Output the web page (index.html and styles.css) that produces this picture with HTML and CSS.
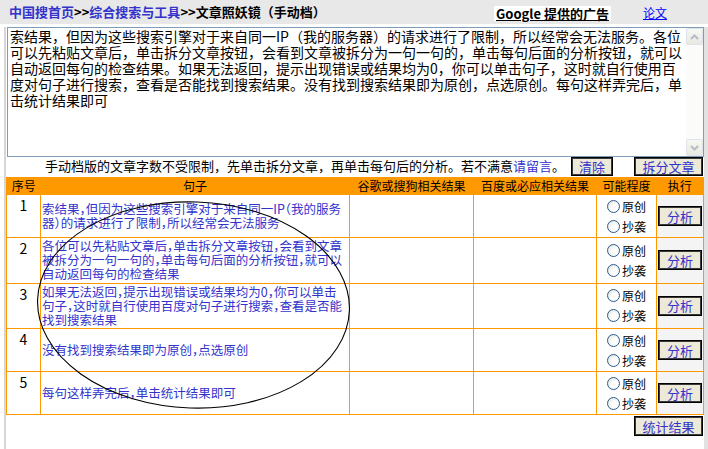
FILE: index.html
```html
<!DOCTYPE html>
<html lang="zh-CN">
<head>
    <meta charset="UTF-8">
    <meta name="viewport" content="width=device-width, initial-scale=1.0">
    <title>文章照妖镜（手动档）</title>
    <link rel="stylesheet" href="styles.css">
</head>
<body>

<div class="topbar">
    <div class="crumbs">
        <a href="#" class="crumb-link">中国搜首页</a>&gt;&gt;<a href="#" class="crumb-link">综合搜索与工具</a>&gt;&gt;文章照妖镜（手动档）
    </div>
    <div class="ad-title">Google 提供的广告</div>
    <a href="#" class="paper-link">论文</a>
</div>

<div class="page">

    <!-- 文章输入框 -->
    <div class="editor">
        <textarea class="article" name="article">索结果，但因为这些搜索引擎对于来自同一IP（我的服务器）的请求进行了限制，所以经常会无法服务。各位
可以先粘贴文章后，单击拆分文章按钮，会看到文章被拆分为一句一句的，单击每句后面的分析按钮，就可以
自动返回每句的检查结果。如果无法返回，提示出现错误或结果均为0，你可以单击句子，这时就自行使用百
度对句子进行搜索，查看是否能找到搜索结果。没有找到搜索结果即为原创，点选原创。每句这样弄完后，单
击统计结果即可</textarea>
        <div class="scrollbar">
            <span class="sb-btn"><svg width="9" height="6" viewBox="0 0 9 6"><path d="M1 5 L4.5 1.5 L8 5" fill="none" stroke="#b4bccb" stroke-width="2"/></svg></span>
            <span class="sb-track"></span>
            <span class="sb-btn"><svg width="9" height="6" viewBox="0 0 9 6"><path d="M1 1 L4.5 4.5 L8 1" fill="none" stroke="#b4bccb" stroke-width="2"/></svg></span>
        </div>
    </div>

    <div class="toolbar">
        <span class="hint">手动档版的文章字数不受限制，先单击拆分文章，再单击每句后的分析。若不满意<a href="#" class="msg-link">请留言</a>。</span>
        <button class="btn btn-clear">清除</button>
        <button class="btn btn-split">拆分文章</button>
    </div>

    <!-- 句子列表 -->
    <div class="results">
        <table class="sentences">
            <colgroup>
                <col class="c-no"><col class="c-text"><col class="c-google"><col class="c-baidu"><col class="c-level"><col class="c-run">
            </colgroup>
            <thead>
                <tr><th>序号</th><th>句子</th><th>谷歌或搜狗相关结果</th><th>百度或必应相关结果</th><th>可能程度</th><th>执行</th></tr>
            </thead>
            <tbody>
                <tr>
                    <td class="no">1</td>
                    <td class="text">索结果，但因为这些搜索引擎对于来自同一IP（我的服务<br>器）的请求进行了限制，所以经常会无法服务</td>
                    <td></td><td></td>
                    <td class="level"><label><input type="radio" name="r1">原创</label><label><input type="radio" name="r1">抄袭</label></td>
                    <td class="run"><button class="btn btn-run">分析</button></td>
                </tr>
                <tr>
                    <td class="no">2</td>
                    <td class="text">各位可以先粘贴文章后，单击拆分文章按钮，会看到文章<br>被拆分为一句一句的，单击每句后面的分析按钮，就可以<br>自动返回每句的检查结果</td>
                    <td></td><td></td>
                    <td class="level"><label><input type="radio" name="r2">原创</label><label><input type="radio" name="r2">抄袭</label></td>
                    <td class="run"><button class="btn btn-run">分析</button></td>
                </tr>
                <tr>
                    <td class="no">3</td>
                    <td class="text">如果无法返回，提示出现错误或结果均为0，你可以单击<br>句子，这时就自行使用百度对句子进行搜索，查看是否能<br>找到搜索结果</td>
                    <td></td><td></td>
                    <td class="level"><label><input type="radio" name="r3">原创</label><label><input type="radio" name="r3">抄袭</label></td>
                    <td class="run"><button class="btn btn-run">分析</button></td>
                </tr>
                <tr>
                    <td class="no">4</td>
                    <td class="text">没有找到搜索结果即为原创，点选原创</td>
                    <td></td><td></td>
                    <td class="level"><label><input type="radio" name="r4">原创</label><label><input type="radio" name="r4">抄袭</label></td>
                    <td class="run"><button class="btn btn-run">分析</button></td>
                </tr>
                <tr>
                    <td class="no">5</td>
                    <td class="text">每句这样弄完后，单击统计结果即可</td>
                    <td></td><td></td>
                    <td class="level"><label><input type="radio" name="r5">原创</label><label><input type="radio" name="r5">抄袭</label></td>
                    <td class="run"><button class="btn btn-run">分析</button></td>
                </tr>
            </tbody>
        </table>
        <svg class="circle" width="360" height="240" viewBox="0 0 360 240">
            <ellipse cx="187.5" cy="128" rx="156" ry="103" transform="rotate(2 187.5 128)" fill="none" stroke="#000" stroke-width="1.1"/>
        </svg>
    </div>

    <div class="footer">
        <button class="btn btn-total">统计结果</button>
    </div>
</div>

</body>
</html>
```

FILE: styles.css
```css
/* 页面 */
body {
    margin: 0;
    padding: 0;
    background-color: #ffffff;
    font-family: "Noto Sans CJK SC", "Liberation Sans", sans-serif;
    font-size: 13px;
    color: #000;
}
a {
    color: #3333cc;
    text-decoration: none;
}

/* 顶部导航 */
.topbar {
    display: flex;
    align-items: center;
    height: 24px;
    background-color: #e8e8e8;
}
.crumbs {
    flex: 1;
    padding-left: 9px;
    font-size: 13px;
    font-weight: bold;
    line-height: 16px;
}
.ad-title {
    width: 117px;
    height: 15px;
    margin-top: 2px;
    background-color: #fff;
    font-size: 13px;
    font-weight: bold;
    line-height: 15px;
    text-align: center;
    text-decoration: underline;
}
.paper-link {
    margin: 0 41px 0 32px;
    color: #0000ff;
    font-size: 12px;
    text-decoration: underline;
}

.page {
    margin-left: 4px;
    border-left: 2px solid #d6d6d6;
    border-right: 4px solid #e2e2e2;
    min-height: calc(100vh - 24px);
}

/* 输入框 */
.editor {
    display: flex;
    box-sizing: border-box;
    width: 697px;
    height: 130px;
    margin: 3px 0 0 1px;
    border: 1px solid #7f9db9;
}
.article {
    flex: 1;
    margin: 0;
    padding: 0 2px;
    border: none;
    resize: none;
    overflow: hidden;
    outline: none;
    font-family: "Noto Sans CJK SC", sans-serif;
    font-size: 14px;
    line-height: 16px;
    color: #000;
}
.scrollbar {
    display: flex;
    flex-direction: column;
    width: 17px;
    background-color: #fbfbf9;
}
.sb-btn {
    display: flex;
    align-items: center;
    justify-content: center;
    box-sizing: border-box;
    height: 17px;
    border: 1px solid #dfe3ea;
    border-radius: 2px;
    background: linear-gradient(#f7f7f3, #e9e8e0);
}
.sb-track {
    flex: 1;
}

/* 工具条 */
.toolbar {
    display: flex;
    align-items: flex-start;
    height: 20px;
}
.hint {
    margin-left: 39px;
    margin-top: 1px;
    font-size: 13px;
    line-height: 16px;
}
.msg-link {
    color: #3333cc;
}
.btn {
    box-sizing: border-box;
    height: 19px;
    padding: 0;
    border: 1px solid #000;
    box-shadow: inset 0 0 0 1px #3a3a3a;
    background-color: #ece9d8;
    color: #3333cc;
    font-family: "Noto Sans CJK SC", sans-serif;
    font-size: 13px;
    line-height: 15px;
    cursor: pointer;
}
.btn-clear {
    width: 42px;
    margin-left: auto;
}
.btn-split {
    width: 69px;
    margin: 0 1px 0 21px;
}

/* 表格 */
.results {
    position: relative;
}
.sentences {
    width: 697px;
    table-layout: fixed;
    border-collapse: collapse;
    border: 1px solid #ff9900;
}
.c-no { width: 34px; }
.c-text { width: 309px; }
.c-google { width: 124px; }
.c-baidu { width: 123px; }
.c-level { width: 60px; }
.c-run { width: 47px; }

.sentences th {
    height: 16px;
    padding: 0;
    background-color: #ff9900;
    font-size: 12px;
    font-weight: normal;
    line-height: 16px;
}
.sentences td {
    padding: 1px 0;
    border: 1px solid #ff9900;
    vertical-align: middle;
}
.sentences td.no {
    padding-top: 2px;
    vertical-align: top;
    text-align: center;
    font-size: 14px;
    line-height: 16px;
}
.sentences td.text {
    padding-left: 1px;
    color: #3333cc;
    font-size: 12.5px;
    line-height: 14.2px;
    white-space: nowrap;
    font-feature-settings: "halt";
}
.level label {
    display: flex;
    align-items: center;
    justify-content: center;
    height: 20px;
    font-size: 12px;
}
.level input[type="radio"] {
    appearance: none;
    width: 13px;
    height: 13px;
    margin: 0 2px 0 0;
    border: 1px solid #2c5d8c;
    border-radius: 50%;
    background: radial-gradient(circle at 65% 65%, #ffffff 35%, #d9d9d2 100%);
}
.sentences td.run {
    background-color: #f4f4f4;
    text-align: center;
}
.btn-run {
    width: 44px;
    height: 20px;
}
.circle {
    position: absolute;
    left: 0;
    top: 0;
    pointer-events: none;
}

.footer {
    display: flex;
    justify-content: flex-end;
    padding-right: 1px;
}
.btn-total {
    width: 69px;
    height: 20px;
    margin-top: 1px;
}
```
